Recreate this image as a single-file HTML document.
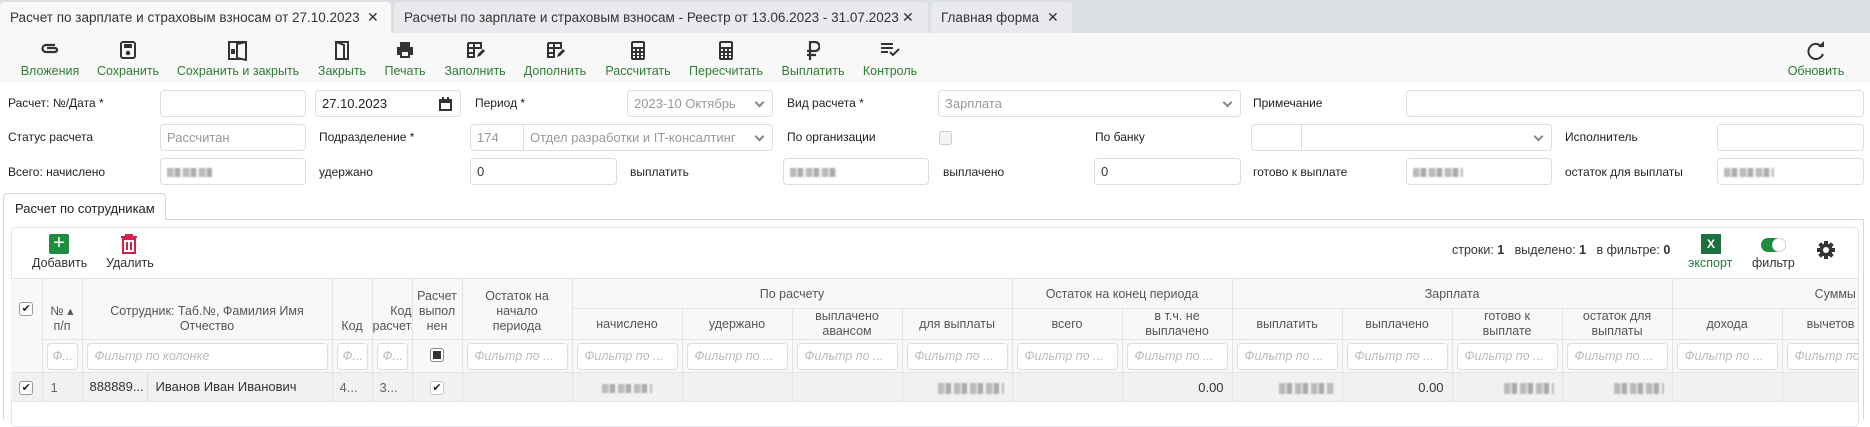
<!DOCTYPE html>
<html><head><meta charset="utf-8">
<style>
*{box-sizing:border-box}
body{margin:0;width:1870px;height:416px;overflow:hidden;background:#fff;font-family:"Liberation Sans","DejaVu Sans",sans-serif;color:#333;position:relative}
.a{position:absolute}
.tabbar{left:0;top:0;width:1870px;height:33px;background:#dcdfe3}
.tab{top:2px;height:31px;background:#e9eaee;border-radius:4px 4px 0 0;font-size:13.5px;line-height:31px;padding-left:10px;color:#333;white-space:nowrap}
.tab.act{background:#f8f8f8}
.tab b{position:absolute;font-weight:bold;font-size:14px;color:#333}
.toolbar{left:0;top:33px;width:1870px;height:50px;background:#f8f8f8}
.tb{top:0;height:50px;text-align:center;font-size:12.5px;color:#2e7d32;white-space:nowrap}
.tb svg{position:absolute;top:8px}
.tb span{position:absolute;top:31px;transform:translateX(-50%);}
.lbl{font-size:12px;color:#222;white-space:nowrap;line-height:14px}
.inp{height:27px;border:1px solid #dcdde3;border-radius:4px;background:#fff;font-size:13px;line-height:25px;padding-left:6px;color:#999;white-space:nowrap;overflow:hidden}
.blur{display:inline-block;height:9px;background:repeating-linear-gradient(90deg,#bbb 0 6px,#ddd 6px 8px,#aaa 8px 13px,#eee 13px 16px);filter:blur(.8px);vertical-align:middle}
.chev{position:absolute;right:9px;top:8px;width:7px;height:7px;border-right:2px solid #888;border-bottom:2px solid #888;transform:rotate(45deg)}
.grid{left:11px;top:278px;width:1847px;overflow:hidden;height:130px}
table{border-collapse:collapse;table-layout:fixed;width:1881px}
td{border:1px solid #e3e4e8;padding:0;font-size:12.5px;color:#555;text-align:center;overflow:hidden;white-space:nowrap;background:#f8f8f9}
td.h2{line-height:15px;white-space:normal}
.f{display:block;margin:0 4px;height:27px;border:1px solid #dcdde3;border-radius:4px;background:#fff;font-style:italic;color:#bbb;font-size:12.5px;line-height:25px;text-align:left;padding-left:7px;overflow:hidden;white-space:nowrap}
tr.d td{background:#f0f1f3;height:28px;font-size:13px;color:#333}
.cb{display:inline-block;width:14px;height:14px;border:1px solid #999;border-radius:3px;background:#fff;font-size:11px;line-height:12px;color:#222;text-align:center}
</style></head><body>

<div class="a tabbar"></div>
<div class="a tab act" style="left:0;width:391px">Расчет по зарплате и страховым взносам от 27.10.2023<b style="left:367px">✕</b></div>
<div class="a tab" style="left:394px;width:534px">Расчеты по зарплате и страховым взносам - Реестр от 13.06.2023 - 31.07.2023<b style="left:508px">✕</b></div>
<div class="a tab" style="left:931px;width:141px">Главная форма<b style="left:116px">✕</b></div>

<div class="a toolbar">
 <div class="a tb" style="left:50px"><svg style="left:-10px" width="20" height="16" viewBox="0 0 20 16"><path d="M15 4H6a3.5 3.5 0 0 0 0 7h9a2 2 0 0 0 0-4H7" fill="none" stroke="#333" stroke-width="2.2"/></svg><span>Вложения</span></div>
 <div class="a tb" style="left:128px"><svg style="left:-8px" width="16" height="18" viewBox="0 0 16 18"><rect x="1" y="1" width="14" height="16" rx="2" fill="none" stroke="#333" stroke-width="2"/><rect x="4" y="3" width="8" height="4" fill="#333"/><circle cx="8" cy="12" r="2.2" fill="#333"/></svg><span>Сохранить</span></div>
 <div class="a tb" style="left:238px"><svg style="left:-10px" width="20" height="20" viewBox="0 0 20 20"><rect x="1" y="1" width="17" height="17" fill="none" stroke="#333" stroke-width="2"/><path d="M9 3l9-2v18l-9-2z" fill="#f8f8f8" stroke="#333" stroke-width="2"/><rect x="3" y="8" width="4" height="5" fill="#333"/></svg><span>Сохранить и закрыть</span></div>
 <div class="a tb" style="left:342px"><svg style="left:-7px" width="14" height="20" viewBox="0 0 14 20"><path d="M1 1h12v17H1z M1 1l8 3v15" fill="none" stroke="#333" stroke-width="2"/></svg><span>Закрыть</span></div>
 <div class="a tb" style="left:405px"><svg style="left:-9px" width="18" height="18" viewBox="0 0 18 18"><path d="M4 1h10v5H4z M1 6h16v8h-3v3H4v-3H1z" fill="#333"/><rect x="6" y="11" width="6" height="4" fill="#f8f8f8"/></svg><span>Печать</span></div>
 <div class="a tb" style="left:475px"><svg style="left:-9px" width="19" height="18" viewBox="0 0 19 18"><path d="M2 2h13v6M2 2v14h7M2 7h13M8 2v14M2 12h7" fill="none" stroke="#333" stroke-width="2"/><path d="M11 16l1-3 5-5 2 2-5 5z" fill="#333"/></svg><span>Заполнить</span></div>
 <div class="a tb" style="left:555px"><svg style="left:-9px" width="19" height="18" viewBox="0 0 19 18"><path d="M2 2h13v6M2 2v14h7M2 7h13M8 2v14M2 12h7" fill="none" stroke="#333" stroke-width="2"/><path d="M11 16l1-3 5-5 2 2-5 5z" fill="#333"/></svg><span>Дополнить</span></div>
 <div class="a tb" style="left:638px"><svg style="left:-7px" width="14" height="19" viewBox="0 0 14 19"><rect width="14" height="19" rx="2" fill="#333"/><rect x="2" y="2" width="10" height="4" fill="#f8f8f8"/><g fill="#f8f8f8"><rect x="2" y="8" width="2" height="2"/><rect x="6" y="8" width="2" height="2"/><rect x="10" y="8" width="2" height="2"/><rect x="2" y="12" width="2" height="2"/><rect x="6" y="12" width="2" height="2"/><rect x="10" y="12" width="2" height="2"/><rect x="2" y="15" width="2" height="2"/><rect x="6" y="15" width="2" height="2"/><rect x="10" y="15" width="2" height="2"/></g></svg><span>Рассчитать</span></div>
 <div class="a tb" style="left:726px"><svg style="left:-7px" width="14" height="19" viewBox="0 0 14 19"><rect width="14" height="19" rx="2" fill="#333"/><rect x="2" y="2" width="10" height="4" fill="#f8f8f8"/><g fill="#f8f8f8"><rect x="2" y="8" width="2" height="2"/><rect x="6" y="8" width="2" height="2"/><rect x="10" y="8" width="2" height="2"/><rect x="2" y="12" width="2" height="2"/><rect x="6" y="12" width="2" height="2"/><rect x="10" y="12" width="2" height="2"/><rect x="2" y="15" width="2" height="2"/><rect x="6" y="15" width="2" height="2"/><rect x="10" y="15" width="2" height="2"/></g></svg><span>Пересчитать</span></div>
 <div class="a tb" style="left:813px"><svg style="left:-7px" width="14" height="19" viewBox="0 0 14 19"><path d="M4 19V1h5a4.5 4.5 0 0 1 0 9H1M1 14h9" fill="none" stroke="#333" stroke-width="2.2"/></svg><span>Выплатить</span></div>
 <div class="a tb" style="left:890px"><svg style="left:-10px" width="20" height="16" viewBox="0 0 20 16"><path d="M1 3h12M1 7h12M1 11h7M10 11l3 3 6-6" fill="none" stroke="#333" stroke-width="2"/></svg><span>Контроль</span></div>
 <div class="a tb" style="left:1816px"><svg style="left:-10px" width="20" height="20" viewBox="0 0 20 20"><path d="M16 6A7.5 7.5 0 1 0 17 13" fill="none" stroke="#333" stroke-width="2"/><path d="M12 6h6V0z" fill="#333"/></svg><span>Обновить</span></div>
</div>

<div class="a lbl" style="left:8px;top:96px">Расчет: №/Дата *</div>
<div class="a inp" style="left:160px;top:90px;width:146px"></div>
<div class="a inp" style="left:315px;top:90px;width:146px;color:#222">27.10.2023<svg style="position:absolute;right:8px;top:6px" width="13" height="14" viewBox="0 0 13 14"><rect x="1" y="3" width="11" height="10" fill="none" stroke="#333" stroke-width="2"/><rect x="1" y="3" width="11" height="3" fill="#333"/><rect x="3" y="0" width="2" height="4" fill="#333"/><rect x="8" y="0" width="2" height="4" fill="#333"/></svg></div>
<div class="a lbl" style="left:475px;top:96px">Период *</div>
<div class="a inp" style="left:627px;top:90px;width:146px">2023-10 Октябрь<i class="chev"></i></div>
<div class="a lbl" style="left:787px;top:96px">Вид расчета *</div>
<div class="a inp" style="left:938px;top:90px;width:303px">Зарплата<i class="chev"></i></div>
<div class="a lbl" style="left:1253px;top:96px">Примечание</div>
<div class="a inp" style="left:1406px;top:90px;width:458px"></div>

<div class="a lbl" style="left:8px;top:130px">Статус расчета</div>
<div class="a inp" style="left:160px;top:124px;width:146px">Рассчитан</div>
<div class="a lbl" style="left:319px;top:130px">Подразделение *</div>
<div class="a inp" style="left:470px;top:124px;width:303px">174<span style="position:absolute;left:52px;top:0;height:25px;border-left:1px solid #dcdde3;padding-left:6px">Отдел разработки и IT-консалтинг</span><i class="chev"></i></div>
<div class="a lbl" style="left:787px;top:130px">По организации</div>
<div class="a" style="left:939px;top:131px;width:13px;height:14px;border:1px solid #ccc;border-radius:3px;background:#f4f4f4"></div>
<div class="a lbl" style="left:1095px;top:130px">По банку</div>
<div class="a inp" style="left:1251px;top:124px;width:301px"><span style="position:absolute;left:49px;top:0;height:25px;border-left:1px solid #dcdde3"></span><i class="chev"></i></div>
<div class="a lbl" style="left:1565px;top:130px">Исполнитель</div>
<div class="a inp" style="left:1717px;top:124px;width:147px"></div>

<div class="a lbl" style="left:8px;top:165px">Всего: начислено</div>
<div class="a inp" style="left:160px;top:158px;width:146px"><span class="blur" style="width:45px"></span></div>
<div class="a lbl" style="left:319px;top:165px">удержано</div>
<div class="a inp" style="left:470px;top:158px;width:147px;color:#333">0</div>
<div class="a lbl" style="left:630px;top:165px">выплатить</div>
<div class="a inp" style="left:783px;top:158px;width:146px"><span class="blur" style="width:47px"></span></div>
<div class="a lbl" style="left:943px;top:165px">выплачено</div>
<div class="a inp" style="left:1094px;top:158px;width:147px;color:#333">0</div>
<div class="a lbl" style="left:1253px;top:165px">готово к выплате</div>
<div class="a inp" style="left:1406px;top:158px;width:146px"><span class="blur" style="width:50px"></span></div>
<div class="a lbl" style="left:1565px;top:165px">остаток для выплаты</div>
<div class="a inp" style="left:1717px;top:158px;width:147px"><span class="blur" style="width:50px"></span></div>

<div class="a" style="left:3px;top:219px;width:1861px;height:200px;border:1px solid #d5d7de;border-bottom:none"></div>
<div class="a" style="left:3px;top:193px;width:163px;height:27px;background:#fff;border:1px solid #d5d7de;border-bottom:none;border-radius:4px 4px 0 0;font-size:13px;line-height:30px;padding-left:11px;color:#222">Расчет по сотрудникам</div>
<div class="a" style="left:11px;top:227px;width:1848px;height:200px;border:1px solid #e3e4e8;border-radius:4px"></div>

<div class="a" style="left:49px;top:234px;width:20px;height:20px;background:#1e8e3e;border-radius:2px;color:#fff;font-size:20px;line-height:19px;text-align:center">+</div>
<div class="a" style="left:32px;top:256px;font-size:12.5px;color:#333">Добавить</div>
<svg class="a" style="left:121px;top:234px" width="16" height="20" viewBox="0 0 16 20"><path d="M0 3h16M5 3V1h6v2M2 5h12v14H2z" fill="none" stroke="#d6204f" stroke-width="2"/><path d="M6 8v8M10 8v8" stroke="#d6204f" stroke-width="2"/></svg>
<div class="a" style="left:106px;top:256px;font-size:12.5px;color:#333">Удалить</div>

<div class="a" style="left:1452px;top:243px;font-size:12.5px;color:#333;white-space:nowrap">строки: <b>1</b> &nbsp; выделено: <b>1</b> &nbsp; в фильтре: <b>0</b></div>
<div class="a" style="left:1701px;top:234px;width:20px;height:20px;background:#1d6f42;color:#fff;font-size:12px;font-weight:bold;line-height:20px;text-align:center">X</div>
<div class="a" style="left:1688px;top:256px;font-size:12.5px;color:#1d7a3a">экспорт</div>
<div class="a" style="left:1761px;top:238px;width:25px;height:14px;background:#1e8e3e;border-radius:7px"><div style="position:absolute;right:0;top:0;width:14px;height:14px;border-radius:7px;background:#fff;border:1px solid #ddd"></div></div>
<div class="a" style="left:1752px;top:256px;font-size:12.5px;color:#333">фильтр</div>
<svg class="a" style="left:1817px;top:241px" width="18" height="18" viewBox="-9 -9 18 18"><g fill="#333"><rect x="-2" y="-9" width="4" height="18"/><rect x="-2" y="-9" width="4" height="18" transform="rotate(45)"/><rect x="-2" y="-9" width="4" height="18" transform="rotate(90)"/><rect x="-2" y="-9" width="4" height="18" transform="rotate(135)"/><circle r="6.5"/></g><circle r="3" fill="#fff"/></svg>

<div class="a grid">
<table>
<colgroup><col style="width:31px"><col style="width:40px"><col style="width:250px"><col style="width:40px"><col style="width:40px"><col style="width:50px"><col style="width:110px"><col span="12" style="width:110px"></colgroup>
<tr style="height:30px">
<td rowspan="3" style="vertical-align:top;padding-top:22px;border-left:none"><span class="cb">✔</span></td>
<td rowspan="2" class="h2" style="vertical-align:bottom;padding-bottom:5px">№ ▴<br>п/п</td>
<td rowspan="2" class="h2" style="vertical-align:bottom;padding-bottom:5px">Сотрудник: Таб.№, Фамилия Имя<br>Отчество</td>
<td rowspan="2" style="vertical-align:bottom;padding-bottom:6px">Код</td>
<td rowspan="2" class="h2" style="vertical-align:bottom;padding-bottom:5px;text-align:right">Код<br>расчета</td>
<td rowspan="2" class="h2" style="vertical-align:bottom;padding-bottom:5px">Расчет<br>выпол<br>нен</td>
<td rowspan="2" class="h2" style="vertical-align:bottom;padding-bottom:5px">Остаток на<br>начало<br>периода</td>
<td colspan="4">По расчету</td>
<td colspan="2">Остаток на конец периода</td>
<td colspan="4">Зарплата</td>
<td colspan="2" style="text-align:left;padding-left:142px">Суммы</td>
</tr>
<tr style="height:30px">
<td>начислено</td><td>удержано</td><td class="h2">выплачено<br>авансом</td><td>для выплаты</td>
<td>всего</td><td class="h2">в т.ч. не<br>выплачено</td>
<td>выплатить</td><td>выплачено</td><td class="h2">готово к<br>выплате</td><td class="h2">остаток для<br>выплаты</td>
<td>дохода</td><td style="text-align:left;padding-left:24px">вычетов</td>
</tr>
<tr style="height:33px">
<td style="border-top:none"><span class="f" style="padding-left:5px">Ф...</span></td>
<td style="border-top:none"><span class="f">Фильтр по колонке</span></td>
<td style="border-top:none"><span class="f" style="padding-left:5px">Ф...</span></td>
<td style="border-top:none"><span class="f" style="padding-left:5px">Ф...</span></td>
<td style="border-top:none"><span style="display:inline-block;width:14px;height:14px;border:1px solid #888;border-radius:3px;background:#fff;padding:2px"><span style="display:block;width:8px;height:8px;background:#333"></span></span></td>
<td style="border-top:none"><span class="f">Фильтр по ...</span></td>
<td style="border-top:none"><span class="f">Фильтр по ...</span></td><td style="border-top:none"><span class="f">Фильтр по ...</span></td><td style="border-top:none"><span class="f">Фильтр по ...</span></td><td style="border-top:none"><span class="f">Фильтр по ...</span></td>
<td style="border-top:none"><span class="f">Фильтр по ...</span></td><td style="border-top:none"><span class="f">Фильтр по ...</span></td>
<td style="border-top:none"><span class="f">Фильтр по ...</span></td><td style="border-top:none"><span class="f">Фильтр по ...</span></td><td style="border-top:none"><span class="f">Фильтр по ...</span></td><td style="border-top:none"><span class="f">Фильтр по ...</span></td>
<td style="border-top:none"><span class="f">Фильтр по ...</span></td><td style="border-top:none"><span class="f">Фильтр по ...</span></td>
</tr>
<tr class="d">
<td style="border-left:none"><span class="cb">✔</span></td>
<td style="text-align:left;padding-left:8px;color:#666">1</td>
<td style="text-align:left;padding-left:7px"><span style="display:inline-block;width:58px;border-right:1px solid #dcdde3;line-height:28px">888889...</span><span style="padding-left:8px">Иванов Иван Иванович</span></td>
<td style="text-align:left;padding-left:7px;color:#666">4...</td>
<td style="text-align:left;padding-left:7px;color:#666">3...</td>
<td><span class="cb" style="border-color:#ccc">✔</span></td>
<td></td>
<td><span class="blur" style="width:50px"></span></td><td></td><td></td>
<td style="text-align:right;padding-right:8px"><span class="blur" style="width:66px;height:11px"></span></td>
<td></td><td style="text-align:right;padding-right:8px">0.00</td>
<td style="text-align:right;padding-right:8px"><span class="blur" style="width:55px;height:11px"></span></td>
<td style="text-align:right;padding-right:8px">0.00</td>
<td style="text-align:right;padding-right:8px"><span class="blur" style="width:50px;height:11px"></span></td>
<td style="text-align:right;padding-right:8px"><span class="blur" style="width:50px;height:11px"></span></td>
<td></td><td></td>
</tr>
</table>
</div>
</body></html>
